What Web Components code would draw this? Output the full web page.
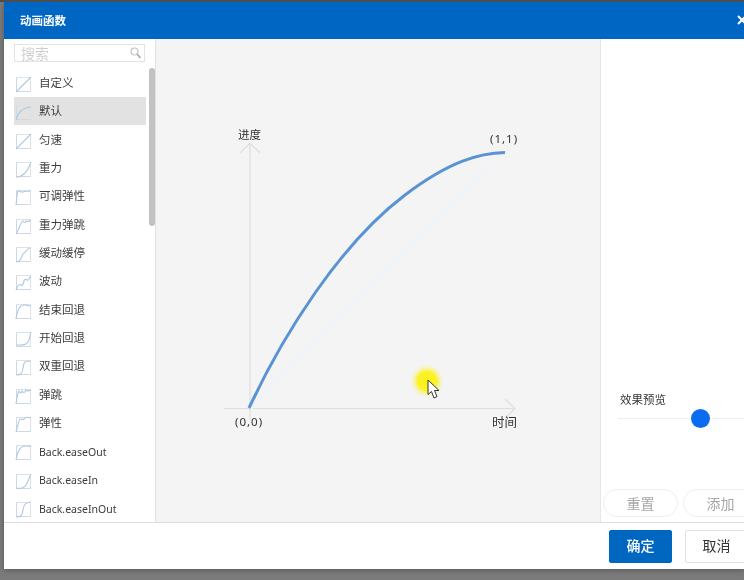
<!DOCTYPE html>
<html><head><meta charset="utf-8"><title>动画函数</title>
<style>
html,body{margin:0;height:100%;overflow:hidden}
body{background:linear-gradient(#4c4c4c 2px,#7b7b7b 2px);font-family:"Noto Sans CJK SC","Noto Sans",sans-serif;color:#333}
</style></head><body>
<anim-dialog></anim-dialog>
<script>
const FONT='"Noto Sans","Noto Sans CJK SC",sans-serif';
const CURVES=[
['自定义','M0 15L15 0'],
['默认','M0 15C2 8 5 3 15 2'],
['匀速','M0 15L15 0'],
['重力','M0 15C7 15 12 9 15 0'],
['可调弹性','M0 15C1 8 1 2 2 1C4 0 5 3 7 2S12 1 15 1'],
['重力弹跳','M0 15C3 12 4 3 7 2C8 4 9 4 10 2C11 3 12 3 15 1'],
['缓动缓停','M0 15C6 15 5 8 8 6S11 1 15 1'],
['波动','M0 15C2 9 4 9 5 10S7 10 8 6S11 6 12 5S14 2 15 1'],
['结束回退','M0 15C1 8 3 1 8 1S13 2 15 2'],
['开始回退','M0 13C5 13 10 14 12 10S14 3 15 0'],
['双重回退','M0 15C5 15 6 14 7 8S8 1 15 1'],
['弹跳','M0 15C1 8 2 3 3 2C4 4 5 5 6 2C7 4 9 4 10 1C11 2 13 2 15 1'],
['弹性','M0 15C2 8 3 1 5 2S7 3 9 1S13 1 15 1'],
['Back.easeOut','M0 15C1 8 4 1 9 1S14 1 15 2'],
['Back.easeIn','M0 14C5 15 8 14 10 11S13 4 15 0'],
['Back.easeInOut','M0 15C5 15 6 14 7 8S9 1 15 0'],
];
class AnimBase extends HTMLElement{
  constructor(){super();this.attachShadow({mode:'open'}).innerHTML=this.markup()}
}
class CurveIcon extends AnimBase{
  markup(){return `<style>:host{display:block;width:15px;height:15px;flex:none}
  svg{display:block;overflow:visible}</style>
  <svg width="15" height="15" viewBox="0 0 15 15" fill="none">
  <path d="M.5 .5H14.500V14.500H.5Z" stroke="#dde2e8"/>
  <path d="M.5 .5V14.500H14.500" stroke="#cdd8e4"/>
  <path d="${this.getAttribute('d')}" stroke="#afc9e2" stroke-width="1.1"/></svg>`}
}
class CurveRow extends AnimBase{
  markup(){return `<style>:host{display:flex;align-items:center;gap:8px;padding-left:2px;width:132px;box-sizing:border-box;
    font:11.5px/1 ${FONT};color:#3c3c3c}
  :host([latin]){font-size:10.5px}
  :host([latin]) span{margin-top:2px}
  :host([selected]){background:#e2e2e2}
  curve-icon{margin-top:3px}</style>
  <curve-icon d="${this.getAttribute('d')}"></curve-icon><span><slot></slot></span>`}
}
class SearchBox extends AnimBase{
  markup(){return `<style>:host{display:flex;align-items:center;justify-content:space-between;box-sizing:border-box;
    width:131px;height:19px;border:1px solid #e3e3e3;padding:0 3px 0 6px;background:#fff}
  span{font:14px/1 "Noto Sans CJK SC",sans-serif;color:#cfcfcf}</style>
  <span>搜索</span>
  <svg width="11" height="12" viewBox="0 0 11 12" fill="none"><circle cx="4.500" cy="4.500" r="3.500" stroke="#c4c4c4" stroke-width="1.2"/><path d="M7 7l3.500 4" stroke="#a8a8a8" stroke-width="1.6"/></svg>`}
}
class CurveSidebar extends AnimBase{
  markup(){return `<style>:host{display:flex;flex-direction:column;box-sizing:border-box;width:152px;flex:none;
    background:#fff;border-right:1px solid #e2e2e2;padding:5px 0 0 10px;position:relative;overflow:hidden}
  .list{display:grid;grid-auto-rows:28.33px;margin-top:7px}
  .bar{position:absolute;left:145px;top:29px;width:6px;height:158px;border-radius:3px;background:#c2c2c2}</style>
  <search-box></search-box>
  <div class="list">${CURVES.map((c,i)=>`<curve-row d="${c[1]}"${i==1?' selected':''}${i>12?' latin':''}>${c[0]}</curve-row>`).join('')}</div>
  <div class="bar"></div>`}
}
class CurveCanvas extends AnimBase{
  markup(){return `<style>:host{display:block;flex:none;width:445px;background:#f4f4f4;border-right:1px solid #e6e6e6;box-sizing:border-box;overflow:hidden}
  svg{display:block}
  text{font:11.5px "Noto Sans","Noto Sans CJK SC",sans-serif;fill:#333}
  .n{letter-spacing:1px}
  .t{font-size:12.5px}</style>
  <svg width="445" height="483" viewBox="156 39 445 483" fill="none">
    <defs><radialGradient id="h"><stop offset="0" stop-color="#fbf112"/><stop offset=".55" stop-color="#fbf22a"/><stop offset="1" stop-color="#f6f3c8" stop-opacity=".05"/></radialGradient></defs>
    <text x="238" y="139">进度</text>
    <path d="M250 420V144M240 153L250 143L260 153" stroke="#dedede" stroke-width="1.2"/>
    <path d="M224 408.500H514M505 399L515 408.500L505 418" stroke="#dedede" stroke-width="1.2"/>
    <path d="M250 408L488 168" stroke="#f0f3f8" stroke-width="5"/>
    <path d="M249 408C283 335 340 244 405 195C450 161 480 153 505 152.500" stroke="#5a93d3" stroke-width="3"/>
    <text class="n" x="490" y="143">(1,1)</text>
    <text class="n" x="235" y="426">(0,0)</text>
    <text class="t" x="492" y="427">时间</text>
    <circle cx="427" cy="381" r="17" fill="url(#h)"/>
    <path d="M428 380V394.500L431.500 391.500L434 398L437 396.500L434.500 390.500H439Z" fill="#fff" stroke="#333" stroke-width="1"/>
  </svg>`}
}
class PillButton extends AnimBase{
  markup(){return `<style>:host{display:flex;align-items:center;justify-content:center;box-sizing:border-box;flex:none;
    width:75px;height:28px;border:1px solid #eee;border-radius:14px;background:#fff;
    font:14px/1 "Noto Sans CJK SC",sans-serif;color:#a6a6a6}</style><slot></slot>`}
}
class PreviewPanel extends AnimBase{
  markup(){return `<style>:host{display:flex;flex-direction:column;flex:1;min-width:0;overflow:hidden;background:#fff;padding:0 0 5px 2px;box-sizing:border-box}
  .label{margin:auto 0 0 17px;font:11.5px/1 "Noto Sans CJK SC",sans-serif;color:#333}
  .track{position:relative;margin:13px 0 70px 15px;height:1px;background:#eeeeee}
  .thumb{position:absolute;left:73px;top:-9.5px;width:19px;height:19px;border-radius:50%;background:#0b6cf0}
  .btns{display:flex;gap:5px}</style>
  <div class="label">效果预览</div>
  <div class="track"><div class="thumb"></div></div>
  <div class="btns"><pill-button>重置</pill-button><pill-button>添加</pill-button></div>`}
}
class FootButton extends AnimBase{
  markup(){return `<style>:host{display:flex;align-items:center;justify-content:center;box-sizing:border-box;flex:none;height:33px;width:63px;border-radius:2px;padding-bottom:3px;
    border:1px solid #e2e2e2;background:#fff;color:#333;font:14px/1 "Noto Sans CJK SC",sans-serif}
  :host([primary]){background:#0067c0;border-color:#0067c0;color:#fff;font-weight:500}</style><slot></slot>`}
}
class AnimDialog extends AnimBase{
  markup(){return `<style>:host{display:flex;flex-direction:column;box-sizing:border-box;margin:2px 0 0 4px;width:740px;height:567px;background:#fff;overflow:hidden;
    box-shadow:0 1px 5px #555;filter:blur(.35px)}
  header{flex:none;height:37px;background:#0066c4;color:#fff;display:flex;align-items:center;padding-left:16px;font:700 11.5px/1 "Noto Sans CJK SC",sans-serif;position:relative}
  .x{position:absolute;left:733px;top:13px}
  main{display:flex;height:483px;flex:none;overflow:hidden}
  footer{flex:1;border-top:1px solid #dedede;display:flex;gap:13px;padding:7px 0 0 605px;box-sizing:border-box;background:#fff;overflow:hidden}</style>
  <header>动画函数<svg class="x" width="10" height="10" viewBox="0 0 10 10"><path d="M1 1L9 9M9 1L1 9" stroke="#fff" stroke-width="2"/></svg></header>
  <main><curve-sidebar></curve-sidebar><curve-canvas></curve-canvas><preview-panel></preview-panel></main>
  <footer><foot-button primary>确定</foot-button><foot-button>取消</foot-button></footer>`}
}
for(const [n,c] of Object.entries({'curve-icon':CurveIcon,'curve-row':CurveRow,'search-box':SearchBox,'curve-sidebar':CurveSidebar,'curve-canvas':CurveCanvas,'pill-button':PillButton,'preview-panel':PreviewPanel,'foot-button':FootButton,'anim-dialog':AnimDialog}))customElements.define(n,c);
</script></body></html>
